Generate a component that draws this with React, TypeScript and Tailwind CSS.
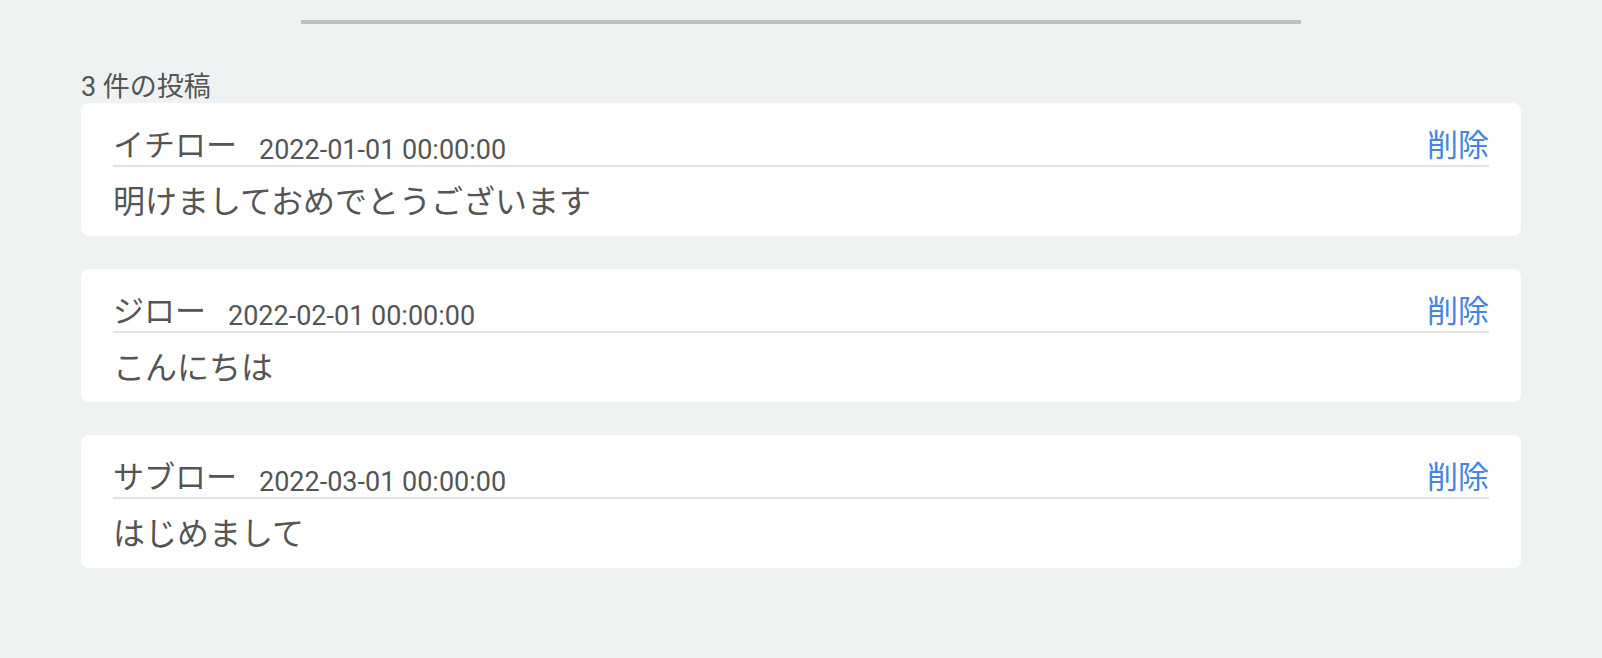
const posts = [
  { id: 1, name: "イチロー", date: "2022-01-01 00:00:00", body: "明けましておめでとうございます" },
  { id: 2, name: "ジロー", date: "2022-02-01 00:00:00", body: "こんにちは" },
  { id: 3, name: "サブロー", date: "2022-03-01 00:00:00", body: "はじめまして" },
];

type Post = (typeof posts)[number];

function PostCard({ post }: { post: Post }) {
  return (
    <article className="rounded-lg bg-white px-8 pt-[23px] pb-[10px]">
      <div className="flex items-end justify-between border-b-2 border-[#e3e3e3]">
        <div className="flex items-end">
          <span className="text-[31px] leading-[39px] text-[#555]">{post.name}</span>
          <span className="ml-[22px] text-[27px] leading-[30px] text-[#555]">{post.date}</span>
        </div>
        <button type="button" className="text-[31px] leading-[39px] text-[#4584e2]">
          削除
        </button>
      </div>
      <p className="pt-[11px] text-[32px] leading-[48px] text-[#555]">{post.body}</p>
    </article>
  );
}

export default function App() {
  return (
    <div
      className="min-h-screen bg-[#eef2f3] pt-[20px]"
      style={{ fontFamily: 'Roboto, "Noto Sans CJK JP", sans-serif' }}
    >
      <div className="mx-auto w-[1440px]">
        <div className="mx-auto h-[4px] w-[1000px] bg-[#bec1c2]" />
        <p className="mt-[47px] text-[27px] leading-[32px] text-[#555]">3 件の投稿</p>
        <div className="flex flex-col gap-[33px]">
          {posts.map((p) => (
            <PostCard key={p.id} post={p} />
          ))}
        </div>
      </div>
    </div>
  );
}
